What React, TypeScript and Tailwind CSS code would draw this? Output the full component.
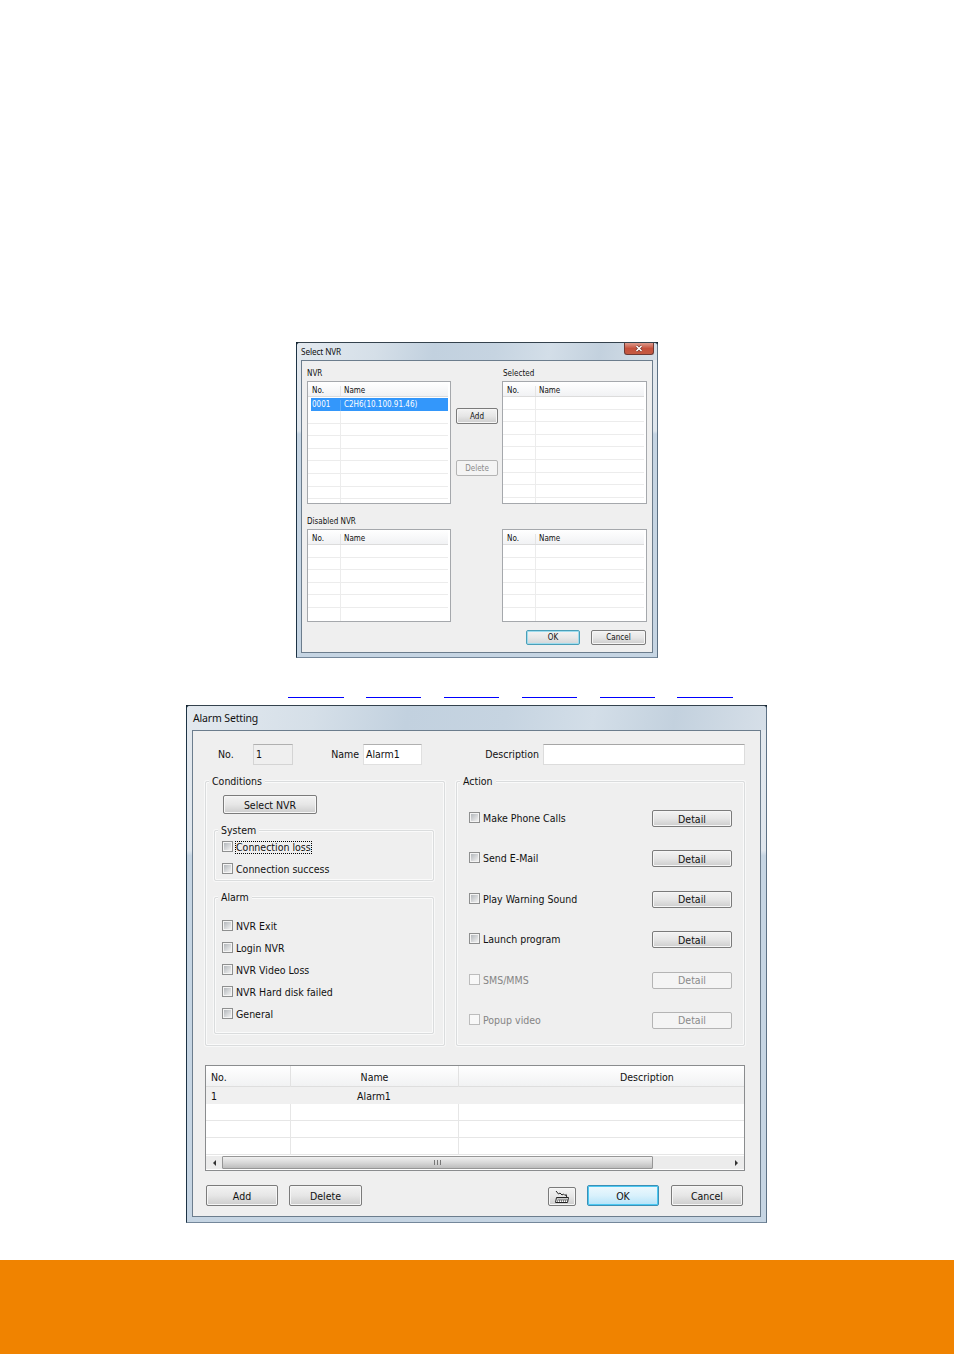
import React from 'react';
import { clsx } from 'clsx';

const GLASS =
  'bg-[linear-gradient(100deg,#e3e9ef_0%,#d5dfe8_22%,#c2d1df_38%,#c6d4e1_55%,#d3dee8_70%,#c3d1de_84%,#d6dfe8_100%)]';

type ButtonProps = {
  children: React.ReactNode;
  className?: string;
  kind?: 'normal' | 'disabled' | 'default' | 'glow';
};

const Button = ({ children, className, kind = 'normal' }: ButtonProps) => (
  <button
    className={clsx(
      'flex items-center justify-center rounded-[2px] border whitespace-nowrap',
      kind === 'normal' &&
        'border-[#7b7b7b] bg-linear-to-b from-[#f3f3f3] via-[#e6e6e6] to-[#cdcdcd] shadow-[inset_0_0_0_1px_#f6f6f6]',
      kind === 'disabled' && 'border-[#b4b4b4] bg-[#f4f4f4] text-[#8a8a8a]',
      kind === 'default' &&
        'border-[#4a9fb8] bg-linear-to-b from-[#f3f3f3] via-[#e8e8e8] to-[#d2d6d8] shadow-[inset_0_0_0_1px_#9fdcee]',
      kind === 'glow' &&
        'border-[#3c8fb5] bg-linear-to-b from-[#edf8fd] via-[#d9f1fc] to-[#b4e3f9] shadow-[inset_0_0_0_1px_#4cc8f2]',
      className
    )}
  >
    {children}
  </button>
);

type WindowProps = {
  title: string;
  className: string;
  titleClass: string;
  bodyClass: string;
  closable?: boolean;
  children: React.ReactNode;
};

const Window = ({ title, className, titleClass, bodyClass, closable, children }: WindowProps) => (
  <section className={clsx('bg-[#10202c]', className)}>
    <div
      className={clsx(
        'flex h-full flex-col rounded-t-[4px] border border-t-[#34424d] border-r-[#5d7184] border-b-[#74879a] border-l-[#1d3345]',
        'bg-[linear-gradient(#e4e9ee_0%,#dfe6ed_28%,#c6d5e3_29%,#c6d5e3_100%)]'
      )}
    >
      <header
        className={clsx(
          "flex shrink-0 justify-between rounded-t-[3px] font-['Noto_Sans','Open_Sans',sans-serif]",
          GLASS,
          titleClass
        )}
      >
        <h1>{title}</h1>
        {closable && (
          <button className="mr-[3px] flex h-[12px] w-[30px] items-center justify-center rounded-b-[3px] border border-t-0 border-[#6d3a35] bg-linear-to-b from-[#dd9a8c] via-[#c4503c] to-[#c55a42]">
            <svg width="8" height="7" viewBox="0 0 8 7">
              <path d="M1.5 1l5 5M6.5 1l-5 5" stroke="#6d3029" strokeWidth="2.8" />
              <path d="M1.5 1l5 5M6.5 1l-5 5" stroke="#fff" strokeWidth="1.6" />
            </svg>
          </button>
        )}
      </header>
      <div className={clsx('min-h-0 flex-1 border border-[#6c7d8d] bg-[#efefef]', bodyClass)}>{children}</div>
    </div>
  </section>
);

type NvrListProps = { lines: number; row?: [string, string] };

const NvrList = ({ lines, row }: NvrListProps) => (
  <div className="flex h-full flex-col overflow-hidden border border-[#a5a8ac] bg-white pr-[2px]">
    <div className="grid h-[15px] shrink-0 grid-cols-[33px_1fr] border-b border-[#dcdcdc] bg-linear-to-b from-white to-[#f1f2f4] pt-[4px]">
      <span className="border-r border-[#e4e4e4] pl-[4px]">No.</span>
      <span className="pl-[3px]">Name</span>
    </div>
    {row && (
      <div className="mt-px ml-[3px] grid h-[13px] shrink-0 grid-cols-[30px_1fr] bg-[#3397fb] pt-[2px] text-white">
        <span className="border-r border-[#5cacf9] pl-px">{row[0]}</span>
        <span className="pl-[3px]">{row[1]}</span>
      </div>
    )}
    {Array.from({ length: lines }).map((_, i) => (
      <div key={i} className="grid h-[12.6px] shrink-0 grid-cols-[33px_1fr] border-b border-[#ececec]">
        <span className="border-r border-[#ececec]" />
      </div>
    ))}
    <div className="grid flex-1 grid-cols-[33px_1fr]">
      <span className="border-r border-[#ececec]" />
    </div>
  </div>
);

const SelectNvr = () => (
  <Window
    title="Select NVR"
    closable
    className="ml-[296px] h-[316px] w-[362px] text-[8px]/[10px]"
    titleClass="h-[17px] pl-[4px] [&>h1]:pt-[3px] [&>h1]:text-[8.2px]/[11px] [&>h1]:tracking-[-0.1px]"
    bodyClass="mx-[4px] mb-[4px] pl-[5px]"
  >
    <div className="grid grid-cols-[144px_51px_145px]">
      <div>
        <div className="flex h-[20px] items-end pb-[2px]">NVR</div>
        <div className="h-[123px]">
          <NvrList lines={7} row={['0001', 'C2H6(10.100.91.46)']} />
        </div>
        <div className="flex h-[25px] items-end pb-[2px]">Disabled NVR</div>
        <div className="h-[93px]">
          <NvrList lines={5} />
        </div>
      </div>
      <div className="ml-[5px] flex flex-col gap-[36px] pt-[47px]">
        <Button className="h-[16px] w-[42px] pt-[2px]">Add</Button>
        <Button className="h-[16px] w-[42px] pt-[2px]" kind="disabled">
          Delete
        </Button>
      </div>
      <div>
        <div className="flex h-[20px] items-end pb-[2px] pl-px">Selected</div>
        <div className="h-[123px]">
          <NvrList lines={8} />
        </div>
        <div className="mt-[25px] h-[93px]">
          <NvrList lines={5} />
        </div>
      </div>
    </div>
    <div className="flex justify-end gap-[11px] pt-[8px] pr-[6px]">
      <Button className="h-[15px] w-[54px] pt-px" kind="default">
        OK
      </Button>
      <Button className="h-[15px] w-[55px] pt-px">Cancel</Button>
    </div>
  </Window>
);

type CheckProps = { label: string; disabled?: boolean; focused?: boolean; className?: string };

const Check = ({ label, disabled, focused, className }: CheckProps) => (
  <label className={clsx('flex items-center', disabled && 'text-[#858585]', className)}>
    <span
      className={clsx(
        'mb-[2px] flex size-[11px] shrink-0 border p-px',
        disabled ? 'border-[#bcbcbc] bg-[#f8f8f8]' : 'border-[#8e8f8f] bg-[#f4f4f4]'
      )}
    >
      {!disabled && <span className="flex-1 bg-linear-to-br from-[#b4b8bc] to-[#f2f2f2]" />}
    </span>
    <span
      className={clsx(
        'ml-[2px] px-px leading-[13px] whitespace-nowrap',
        focused && 'outline-1 -outline-offset-1 outline-dotted outline-black'
      )}
    >
      {label}
    </span>
  </label>
);

type GroupProps = { legend: string; className?: string; children: React.ReactNode };

// etched frame, light line on the inside and outside
const Group = ({ legend, className, children }: GroupProps) => (
  <div
    className={clsx(
      'rounded-[2px] border border-[#dadcdd] shadow-[inset_0_0_0_1px_#fafafa,0_0_0_1px_#f8f8f8]',
      className
    )}
  >
    <div className="-mt-[8px] ml-[3px] h-[15px] w-fit bg-[#efefef] px-[3px] leading-[15px]">{legend}</div>
    {children}
  </div>
);

const actions = [
  { label: 'Make Phone Calls' },
  { label: 'Send E-Mail' },
  { label: 'Play Warning Sound' },
  { label: 'Launch program' },
  { label: 'SMS/MMS', disabled: true },
  { label: 'Popup video', disabled: true },
];

const alarms = ['NVR Exit', 'Login NVR', 'NVR Video Loss', 'NVR Hard disk failed', 'General'];

const KeyboardIcon = () => (
  <svg width="16" height="14" viewBox="0 0 16 14" fill="none">
    <path d="M2 1l2.5 3L6 3l2 2 1.5-1 1.5 1.5 1.2-1 .6 3" stroke="#222" />
    <path d="M2.5 7.5h12l-1 5h-12z" fill="#fff" stroke="#222" />
    <path d="M3.5 9h10M3 11h10" stroke="#222" strokeDasharray="1 1" />
    <path d="M4.5 10h9" stroke="#222" strokeDasharray="1 1" />
  </svg>
);

const AlarmTable = () => (
  <div className="mt-[19px] flex h-[106px] w-[540px] flex-col border border-[#8a8c8e] bg-white pb-px">
    <div className="grid h-[21px] grid-cols-[85px_168px_1fr] border-b border-[#dedede] bg-linear-to-b from-white to-[#f1f2f3] leading-[23px]">
      <span className="border-r border-[#e2e2e2] pl-[5px]">No.</span>
      <span className="border-r border-[#e2e2e2] text-center">Name</span>
      <span className="pl-[161px]">Description</span>
    </div>
    <div className="grid h-[17px] grid-cols-[85px_168px_1fr] bg-[#f0f0f0] leading-[18px]">
      <span className="pl-[5px]">1</span>
      <span className="pr-[2px] text-center">Alarm1</span>
    </div>
    {[0, 1, 2].map((i) => (
      <div key={i} className="grid h-[17px] shrink-0 grid-cols-[85px_168px_1fr] border-b border-[#e6e6e6]">
        <span className="border-r border-[#e6e6e6]" />
        <span className="border-r border-[#e6e6e6]" />
      </div>
    ))}
    <div className="mt-auto flex h-[13px] items-center bg-[#ececec]">
      <span className="flex w-[16px] justify-center">
        <svg width="3" height="6" viewBox="0 0 3 6">
          <path d="M3 0v6L0 3z" fill="#333" />
        </svg>
      </span>
      <span className="flex h-[13px] w-[431px] items-center justify-center gap-px rounded-[1px] border border-[#969696] bg-linear-to-b from-[#f0f0f0] via-[#d9d9d9] to-[#bdbdbd]">
        <i className="h-[5px] w-px bg-[#777]" />
        <i className="ml-px h-[5px] w-px bg-[#777]" />
        <i className="ml-px h-[5px] w-px bg-[#777]" />
      </span>
      <span className="flex flex-1 justify-end pr-[6px]">
        <svg width="3" height="6" viewBox="0 0 3 6">
          <path d="M0 0v6l3-3z" fill="#333" />
        </svg>
      </span>
    </div>
  </div>
);

const AlarmSetting = () => (
  <Window
    title="Alarm Setting"
    className="ml-[186px] h-[518px] w-[581px] text-[10.5px]/[14px]"
    titleClass="h-[24px] pl-[6px] [&>h1]:pt-[5px] [&>h1]:text-[10.5px]/[14px] [&>h1]:tracking-[-0.15px]"
    bodyClass="mx-[5px] mb-[5px] pl-[12px]"
  >
    <div className="mt-[13px] grid h-[21px] w-[540px] grid-cols-[48px_40px_70px_59px_121px_1fr] items-center">
      <span className="pb-px pl-[13px]">No.</span>
      <span className="h-[21px] border border-[#d4d4d4] border-t-[#b0b0b0] pl-[2px] leading-[19px]">1</span>
      <span className="pr-[4px] pb-px text-right">Name</span>
      <span className="h-[21px] border border-[#e0e0e0] border-t-[#b0b0b0] bg-white pl-[2px] leading-[18px]">
        Alarm1
      </span>
      <span className="pr-[4px] pb-px text-right">Description</span>
      <span className="h-[21px] border border-[#dcdcdc] border-t-[#a6a6a6] bg-white" />
    </div>

    <div className="mt-[16px] flex gap-[11px]">
      <Group legend="Conditions" className="h-[265px] w-[240px]">
        <div className="pl-[8px]">
          <Button className="mt-[6px] ml-[9px] h-[19px] w-[94px]">Select NVR</Button>
          <Group legend="System" className="mt-[16px] h-[51px] w-[220px]">
            <div className="flex flex-col gap-[8px] pt-[2px] pl-[7px]">
              <Check className="h-[14px]" label="Connection loss" focused />
              <Check className="h-[14px]" label="Connection success" />
            </div>
          </Group>
          <Group legend="Alarm" className="mt-[16px] h-[137px] w-[220px]">
            <div className="flex flex-col gap-[8px] pt-[14px] pl-[7px]">
              {alarms.map((a) => (
                <Check key={a} className="h-[14px]" label={a} />
              ))}
            </div>
          </Group>
        </div>
      </Group>
      <Group legend="Action" className="h-[265px] w-[289px]">
        <div className="flex flex-col gap-[23.4px] pt-[21px] pr-[12px] pl-[12px]">
          {actions.map((a) => (
            <div key={a.label} className="flex h-[17px] items-center justify-between">
              <Check label={a.label} disabled={a.disabled} />
              <Button className="h-[17px] w-[80px]" kind={a.disabled ? 'disabled' : 'normal'}>
                Detail
              </Button>
            </div>
          ))}
        </div>
      </Group>
    </div>

    <AlarmTable />

    <div className="mt-[14px] flex w-[538px] items-end pl-px">
      <Button className="h-[21px] w-[72px]">Add</Button>
      <Button className="ml-[11px] h-[21px] w-[73px]">Delete</Button>
      <Button className="ml-auto h-[19px] w-[28px]">
        <KeyboardIcon />
      </Button>
      <Button className="ml-[11px] h-[21px] w-[72px]" kind="glow">
        OK
      </Button>
      <Button className="ml-[12px] h-[21px] w-[72px]">Cancel</Button>
    </div>
  </Window>
);

export default function App() {
  return (
    <main className="flex h-[1354px] w-[954px] flex-col bg-white pt-[342px] font-['DejaVu_Sans_Condensed','DejaVu_Sans','Noto_Sans',sans-serif] text-[#111] [font-stretch:condensed]">
      <SelectNvr />
      <div className="mt-[39px] mb-[7px] ml-[288px] flex h-px gap-[22.3px]">
        {Array.from({ length: 6 }).map((_, i) => (
          <span key={i} className="w-[55.6px] bg-[#0000ff]" />
        ))}
      </div>
      <AlarmSetting />
      <footer className="mt-auto h-[94px] bg-[#f08300]" />
    </main>
  );
}
